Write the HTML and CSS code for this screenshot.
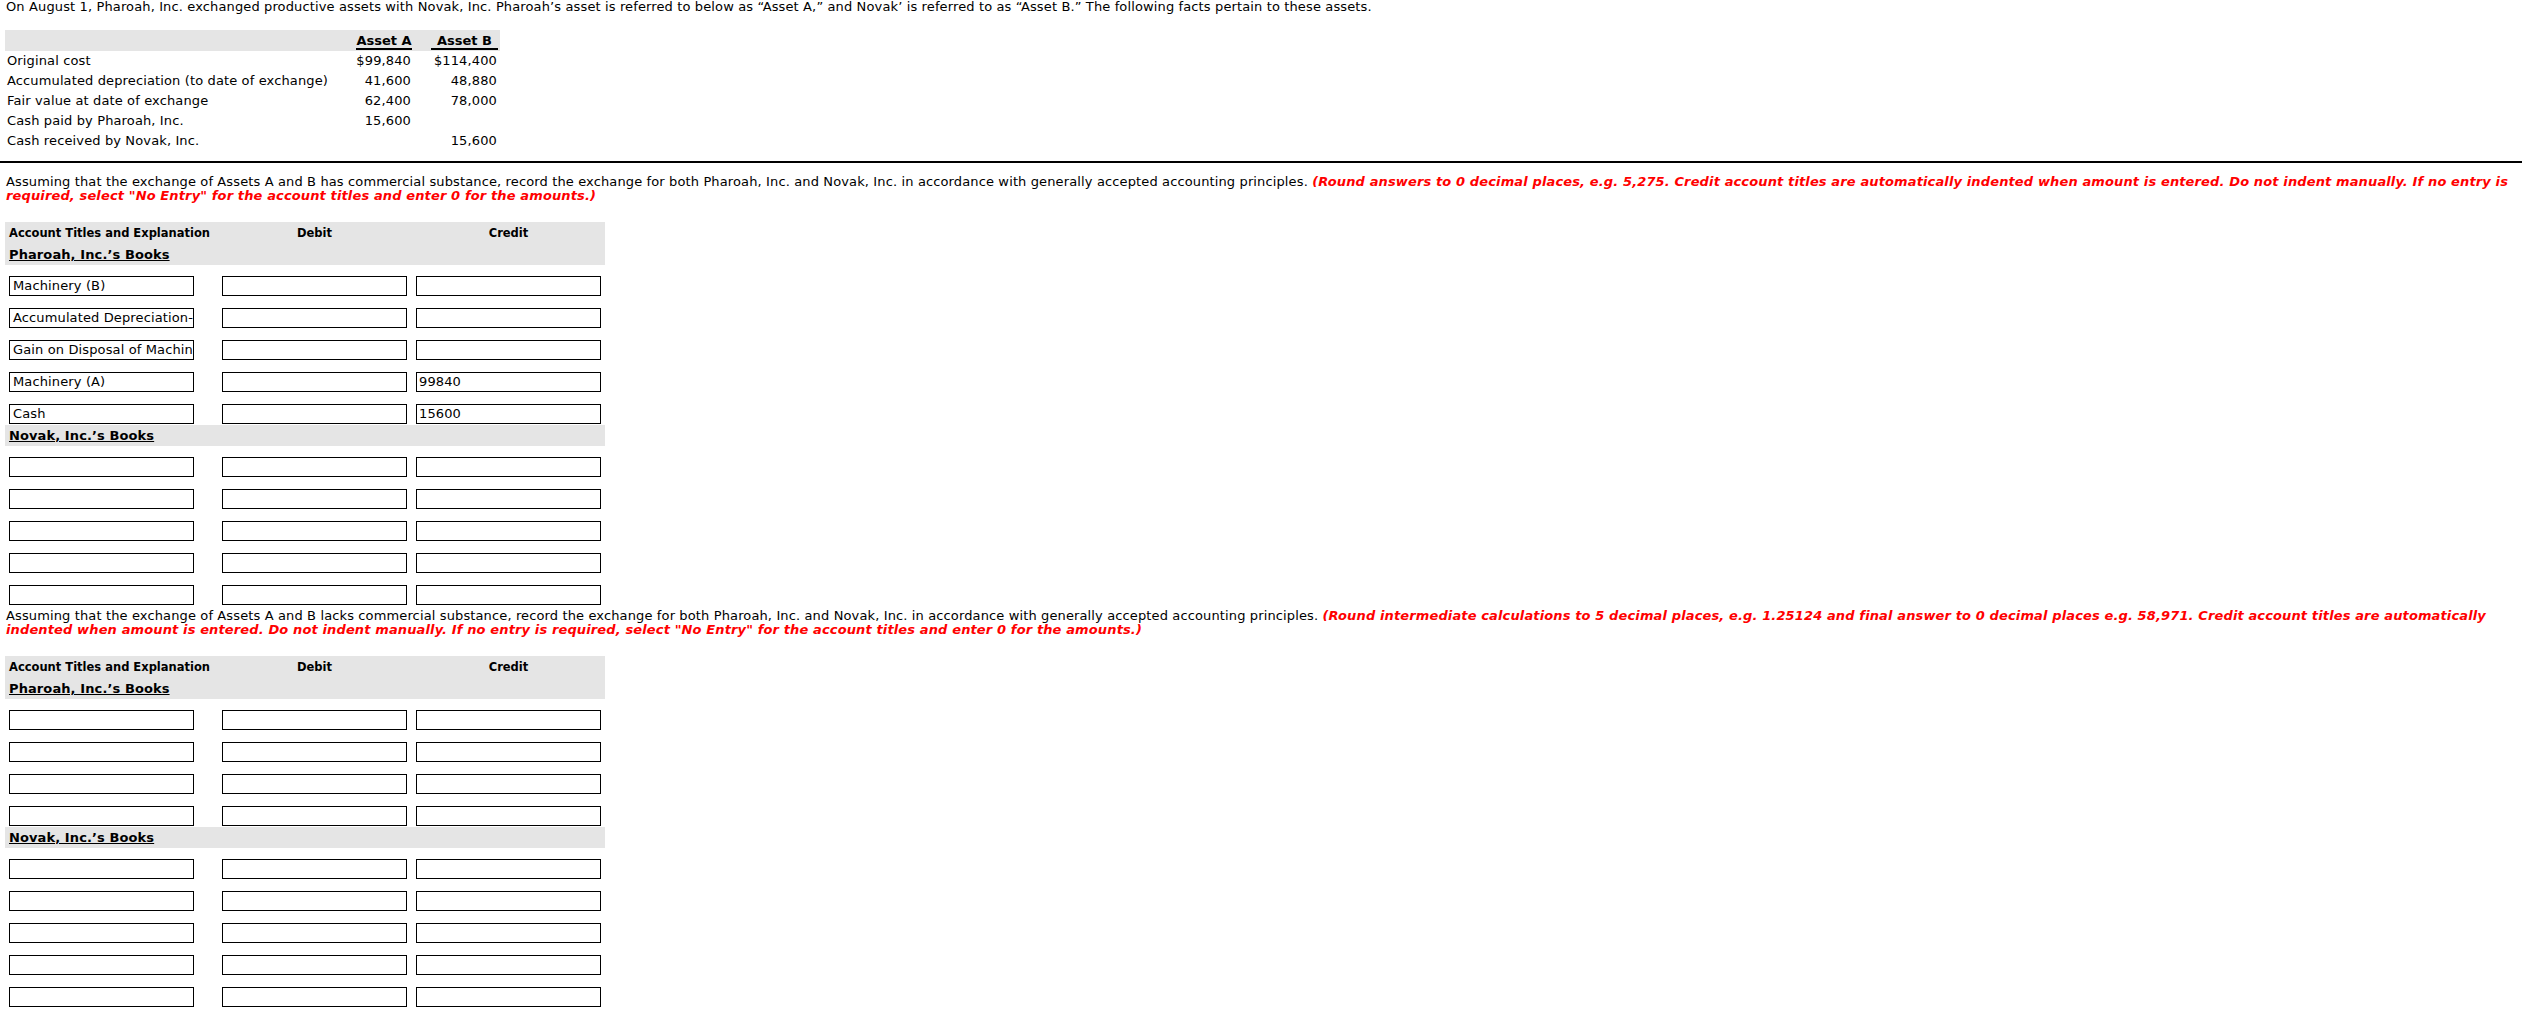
FILE: index.html
```html
<!DOCTYPE html>
<html lang="en">
<head>
<meta charset="utf-8">
<title>Exchange of assets</title>
<link rel="stylesheet" href="styles.css">
</head>
<body>
<div class="page">
  <p class="intro">On August 1, Pharoah, Inc. exchanged productive assets with Novak, Inc. Pharoah’s asset is referred to below as “Asset A,” and Novak’ is referred to as “Asset B.” The following facts pertain to these assets.</p>

  <table class="facts">
    <colgroup><col class="c-label"><col class="c-a"><col class="c-b"></colgroup>
    <thead>
      <tr><th></th><th class="a"><span class="colhead">Asset A</span></th><th class="b"><span class="colhead">Asset B</span></th></tr>
    </thead>
    <tbody>
      <tr><td class="label">Original cost</td><td class="a">$99,840</td><td class="b">$114,400</td></tr>
      <tr><td class="label">Accumulated depreciation (to date of exchange)</td><td class="a">41,600</td><td class="b">48,880</td></tr>
      <tr><td class="label">Fair value at date of exchange</td><td class="a">62,400</td><td class="b">78,000</td></tr>
      <tr><td class="label">Cash paid by Pharoah, Inc.</td><td class="a">15,600</td><td class="b"></td></tr>
      <tr><td class="label">Cash received by Novak, Inc.</td><td class="a"></td><td class="b">15,600</td></tr>
    </tbody>
  </table>

  <hr class="rule">

  <p class="instr">Assuming that the exchange of Assets A and B has commercial substance, record the exchange for both Pharoah, Inc. and Novak, Inc. in accordance with generally accepted accounting principles. <em class="note">(Round answers to 0 decimal places, e.g. 5,275. Credit account titles are automatically indented when amount is entered. Do not indent manually. If no entry is required, select "No Entry" for the account titles and enter 0 for the amounts.)</em></p>

  <div class="journal">
    <div class="jhead"><span class="h1">Account Titles and Explanation</span><span class="h2">Debit</span><span class="h3">Credit</span></div>
    <div class="jgroup"><span class="books">Pharoah, Inc.’s Books</span></div>
    <div class="jrow"><span class="field f1">Machinery (B)</span><span class="field"></span><span class="field"></span></div>
    <div class="jrow"><span class="field f1">Accumulated Depreciation-</span><span class="field"></span><span class="field"></span></div>
    <div class="jrow"><span class="field f1">Gain on Disposal of Machin</span><span class="field"></span><span class="field"></span></div>
    <div class="jrow"><span class="field f1">Machinery (A)</span><span class="field"></span><span class="field">99840</span></div>
    <div class="jrow"><span class="field f1">Cash</span><span class="field"></span><span class="field">15600</span></div>
    <div class="jgroup"><span class="books">Novak, Inc.’s Books</span></div>
    <div class="jrow"><span class="field f1"></span><span class="field"></span><span class="field"></span></div>
    <div class="jrow"><span class="field f1"></span><span class="field"></span><span class="field"></span></div>
    <div class="jrow"><span class="field f1"></span><span class="field"></span><span class="field"></span></div>
    <div class="jrow"><span class="field f1"></span><span class="field"></span><span class="field"></span></div>
    <div class="jrow"><span class="field f1"></span><span class="field"></span><span class="field"></span></div>
  </div>

  <p class="instr instr2">Assuming that the exchange of Assets A and B lacks commercial substance, record the exchange for both Pharoah, Inc. and Novak, Inc. in accordance with generally accepted accounting principles. <em class="note">(Round intermediate calculations to 5 decimal places, e.g. 1.25124 and final answer to 0 decimal places e.g. 58,971. Credit account titles are automatically indented when amount is entered. Do not indent manually. If no entry is required, select "No Entry" for the account titles and enter 0 for the amounts.)</em></p>

  <div class="journal">
    <div class="jhead"><span class="h1">Account Titles and Explanation</span><span class="h2">Debit</span><span class="h3">Credit</span></div>
    <div class="jgroup"><span class="books">Pharoah, Inc.’s Books</span></div>
    <div class="jrow"><span class="field f1"></span><span class="field"></span><span class="field"></span></div>
    <div class="jrow"><span class="field f1"></span><span class="field"></span><span class="field"></span></div>
    <div class="jrow"><span class="field f1"></span><span class="field"></span><span class="field"></span></div>
    <div class="jrow"><span class="field f1"></span><span class="field"></span><span class="field"></span></div>
    <div class="jgroup"><span class="books">Novak, Inc.’s Books</span></div>
    <div class="jrow"><span class="field f1"></span><span class="field"></span><span class="field"></span></div>
    <div class="jrow"><span class="field f1"></span><span class="field"></span><span class="field"></span></div>
    <div class="jrow"><span class="field f1"></span><span class="field"></span><span class="field"></span></div>
    <div class="jrow"><span class="field f1"></span><span class="field"></span><span class="field"></span></div>
    <div class="jrow"><span class="field f1"></span><span class="field"></span><span class="field"></span></div>
  </div>
</div>
</body>
</html>
```
FILE: styles.css
```css
html, body {
  margin: 0;
  padding: 0;
  background: #fff;
}

body {
  font-family: "DejaVu Sans", Verdana, sans-serif;
  font-size: 13px;
  letter-spacing: 0.13px;
  color: #000;
}

.page {
  padding: 0 8px 0 5px;
}

.intro {
  margin: 0;
  padding-left: 1px;
  line-height: 14px;
}

/* facts table */
.facts {
  margin-top: 16px;
  width: 495px;
  table-layout: fixed;
  border-collapse: collapse;
  border-spacing: 0;
}
.c-label { width: 351px; }
.c-a { width: 56px; }
.c-b { width: 88px; }

.facts th {
  background: #e5e5e5;
  padding: 4px 0 1px;
  font-weight: bold;
  letter-spacing: 0;
}
.facts th.b {
  padding-left: 19px;
  padding-right: 2px;
}
.colhead {
  display: block;
  line-height: 14px;
  text-align: center;
  border-bottom: 2px solid #000;
}
.facts td {
  padding: 0;
  height: 20px;
  line-height: 20px;
  white-space: nowrap;
}
.facts td.label {
  padding-left: 2px;
}
.facts td.a {
  text-align: right;
  padding-right: 1px;
}
.facts td.b {
  text-align: right;
  padding-left: 19px;
  padding-right: 3px;
}

.rule {
  border: 0;
  border-top: 2px solid #000;
  height: 0;
  margin: 10px -8px 12px -5px;
}

.instr {
  margin: 0 0 19px;
  padding-left: 1px;
  line-height: 14px;
}
.instr2 {
  margin-top: 3px;
}
.note {
  color: #f00;
  font-weight: bold;
  font-style: italic;
}

/* journal */
.journal {
  width: 600px;
}
.jhead {
  display: grid;
  grid-template-columns: 212px 195px 193px;
  align-items: center;
  height: 22px;
  background: #e5e5e5;
  font-weight: bold;
  font-size: 11.5px;
  letter-spacing: 0;
  white-space: nowrap;
}
.jhead .h1 {
  padding-left: 4px;
}
.jhead .h2,
.jhead .h3 {
  text-align: center;
}
.jgroup {
  height: 21px;
  line-height: 21px;
  background: #e5e5e5;
  padding-left: 4px;
}
.books {
  font-weight: bold;
  text-decoration: underline;
  letter-spacing: 0.1px;
}
.jrow {
  display: grid;
  grid-template-columns: 212px 195px 193px;
  justify-items: center;
  padding: 11px 0 1px;
}
.field {
  box-sizing: border-box;
  display: block;
  width: 185px;
  height: 20px;
  border: 1px solid #000;
  background: #fff;
  padding: 0 2px;
  line-height: 18px;
  white-space: nowrap;
  overflow: hidden;
}
.field.f1 {
  justify-self: start;
  margin-left: 4px;
  padding-left: 3px;
}
```
